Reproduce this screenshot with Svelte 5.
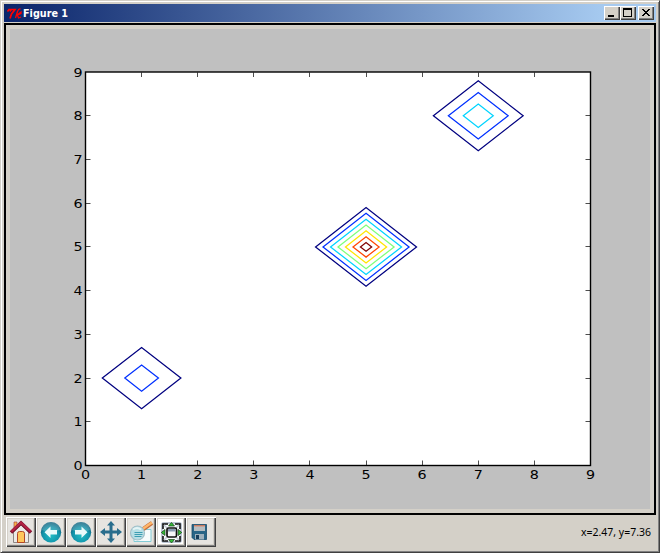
<script>
  const ticks = [0, 1, 2, 3, 4, 5, 6, 7, 8, 9];
  const px = (x) => 75.5 + x * 56.11;
  const py = (y) => 436.5 - y * 43.72;
  const jet = ['#000080', '#0030ff', '#00d4ff', '#7dff7a', '#ffe600', '#ff4600', '#800000'];
  const peaks = [
    { x: 5, y: 5, radii: [0.9, 0.767, 0.633, 0.5, 0.367, 0.233, 0.1] },
    { x: 7, y: 8, radii: [0.8, 0.533, 0.267] },
    { x: 1, y: 2, radii: [0.7, 0.3] }
  ];
  const diamond = (p, r) =>
    `M${px(p.x - r)} ${py(p.y)}L${px(p.x)} ${py(p.y + r)}L${px(p.x + r)} ${py(p.y)}L${px(p.x)} ${py(p.y - r)}Z`;
  const tools = ['home', 'back', 'forward', 'pan', 'zoom', 'subplots', 'save'];
</script>

<div class="window">
  <header>
    <svg class="tk" width="16" height="18" viewBox="0 0 16 18" fill="none" stroke="#f00" stroke-width="1.3">
      <path d="M.5 7.500L2 5.500H8L4.500 10L3 14.500M4 6L3 7.500" stroke-width="1.700" />
      <path d="M13.500 5Q11.500 4.500 10.500 7.500L8.500 14M10 11L14 8V9.500L10.500 11L11.500 14L14 13" />
    </svg>
    <svg class="title" width="52" height="18"><text x="0" y="13" textLength="45" lengthAdjust="spacingAndGlyphs">Figure 1</text></svg>
    <span class="controls">
      <button aria-label="Minimize"><svg width="16" height="14" shape-rendering="crispEdges"><path d="M4 9h6v2H4z" /></svg></button>
      <button aria-label="Maximize"><svg width="16" height="14" shape-rendering="crispEdges"><path fill-rule="evenodd" d="M3 2h9v9H3zM4 4v6h7V4z" /></svg></button>
      <button class="close" aria-label="Close"><svg width="16" height="14" shape-rendering="crispEdges"><path d="M4 3h2v1h1v1h2V4h1V3h2v1h-1v1h-1v1H9v1h1v1h1v1h1v1h-2V9H9V8H7v1H6v1H4V9h1V8h1V7h1V6H6V5H5V4H4z" /></svg></button>
    </span>
  </header>

  <main>
    <svg class="plot" width="640" height="480" viewBox="0 0 640 480">
      <rect x="75.5" y="43" width="505" height="393.5" fill="#fff" stroke="#000" stroke-width="1.4" />
      {#each ticks as t}
        {#if t > 0 && t < 9}
          <path d="M{Math.floor(px(t)) + 0.5} 436v-4.5M{Math.floor(px(t)) + 0.5} 43.5v4.5M76 {Math.floor(py(t)) + 0.5}h4.5M580 {Math.floor(py(t)) + 0.5}h-4.5" stroke="#000" stroke-width=".7" />
        {/if}
        <text transform="translate({px(t)} 450.3) scale(1.1 1)" text-anchor="middle">{t}</text>
        <text transform="translate(72.5 {py(t) + 4.5}) scale(1.1 1)" text-anchor="end">{t}</text>
      {/each}
      {#each peaks as p}
        {#each p.radii as r, i}
          <path d={diamond(p, r)} fill="none" stroke={r === 0.1 ? jet[6] : jet[i]} stroke-width="1.25" />
        {/each}
      {/each}
    </svg>
  </main>

  <footer>
    <div class="toolbar">
      {#each tools as tool}
        <button class={tool} aria-label={tool}>
          <svg width="24" height="24" viewBox="0 0 24 24">
            {#if tool === 'home'}
              <path d="M5 2h3v6H5z" fill="#f7b24a" stroke="#a33535" stroke-width=".6" />
              <path d="M4.500 12L12 5l7.500 7v10.500h-15z" fill="#eceae7" stroke="#77706c" stroke-width=".8" />
              <path d="M8.500 22.500v-9q0-2 2-2h3q2 0 2 2v9z" fill="#ffc65b" stroke="#b34826" />
              <path d="M2 12.500L12 3l10 9.500" fill="none" stroke="#7d1230" stroke-width="3.600" />
              <path d="M2.500 11.500L12 2.700l9.500 8.800" fill="none" stroke="#b52243" stroke-width="2" />
            {:else if tool === 'back' || tool === 'forward'}
              <defs>
                <radialGradient id="teal-{tool}" cx=".5" cy=".65" r=".6">
                  <stop offset="0" stop-color="#20bcc5" /><stop offset=".65" stop-color="#1295ab" /><stop offset="1" stop-color="#14607d" />
                </radialGradient>
              </defs>
              <circle cx="12" cy="12.300" r="10.200" fill="url(#teal-{tool})" />
              <path d="M3 10a9 8 0 0 1 18 0q-9 4-18 0z" fill="#8bc9d4" opacity=".35" />
              <path transform={tool === 'forward' ? 'translate(24 0) scale(-1 1)' : undefined} d="M5.500 12.300l6-5.800v3.500h6.500v4.600h-6.500v3.500z" fill="#e9fafa" />
            {:else if tool === 'pan'}
              <path d="M12 1l4 4.500h-2.500v5H18V8l5 4-5 4v-2.500h-4.500v5H16l-4 4.500-4-4.500h2.500v-5H6V16l-5-4 5-4v2.500h4.500v-5H8z" fill="#286d8d" />
            {:else if tool === 'zoom'}
              <path d="M5 9.500h17v12H5z" fill="#f7fcfc" stroke="#82cbd5" />
              <path d="M13 10L20 5l3-2" stroke="#c56f3c" stroke-width="4" />
              <path d="M13 9.500L20 4.500l3-2" stroke="#ffb669" stroke-width="2.400" />
              <circle cx="8.500" cy="13" r="7" fill="#b8dfe5" stroke="#a0bfc8" stroke-width="1.200" />
              <path d="M4 9.500q4-3 8 0" fill="none" stroke="#e5f4f5" stroke-width="2" />
              <path d="M5.500 12.500h8M5.500 14.500h8M5.500 16.500h7" stroke="#3c9eb2" stroke-width="1.100" />
            {:else if tool === 'subplots'}
              <rect x="3" y="3" width="19" height="19" rx="1" fill="#f8fafc" stroke="#a6b3c4" stroke-width="1.500" />
              <path d="M4 9V4h5M16 4h5v5M21 16v5h-5M9 21H4v-5" fill="none" stroke="#111" stroke-width="1.600" />
              <path d="M5 5l4 4M20 5l-4 4M5 20l4-4M20 20l-4-4" stroke="#c1cad5" stroke-width="1.500" />
              <rect x="8" y="8" width="9.500" height="9" rx="1.500" fill="#f6f7fa" stroke="#111" stroke-width="1.700" />
              <path d="M9 9h7.500v2.500H9z" fill="#899bb3" />
              <path d="M12.500 2.500l3 3.500h-6zM12.500 23l3-3.500h-6zM2.300 12.500l3.700-3v6zM22.800 12.500l-3.700-3v6z" fill="#32bd37" stroke="#153d17" stroke-width=".7" />
            {:else}
              <path d="M3 4.500h14.500v15H5l-2-2z" fill="#296586" stroke="#1b4d6b" stroke-width=".8" />
              <path d="M5 5h11v6H5z" fill="#c9ced1" />
              <path d="M5 5h11v1.500H5z" fill="#c67b61" />
              <path d="M5 8h11M5 10h11" stroke="#a2acb1" />
              <path d="M6 14h9v5.500H6z" fill="#9fb1bc" />
              <path d="M7 15h3v4H7z" fill="#173e5b" />
            {/if}
          </svg>
        </button>
      {/each}
    </div>
    <svg class="status" width="76" height="28"><text x="1" y="18.5" textLength="70" lengthAdjust="spacingAndGlyphs">x=2.47, y=7.36</text></svg>
  </footer>
</div>

<style>
  :global(body) { background: #d4d0c8; }
  .window {
    box-sizing: border-box;
    width: 660px;
    height: 553px;
    padding: 3px 3px 0;
    background: #d4d0c8;
    border: 1px solid #d4d0c8;
    border-right-color: #404040;
    border-bottom-color: #404040;
    box-shadow: inset 1px 1px #fff, inset -1px -1px #808080;
    display: flex;
    flex-direction: column;
  }
  header {
    width: 652px;
    height: 18px;
    display: flex;
    align-items: center;
    background: linear-gradient(90deg, #0a246a, #a6caf0 92%);
  }
  svg { display: block; }
  .tk { margin-left: 3px; }
  .title text { font: bold 11px "DejaVu Sans Condensed", "DejaVu Sans", sans-serif; fill: #fff; }
  .controls { display: flex; margin-left: auto; padding-right: 2px; }
  button {
    box-sizing: border-box;
    padding: 0;
    border: 0;
    border-radius: 0;
    background: #d4d0c8;
    box-shadow: inset 1px 1px #fff, inset -1px -1px #404040, inset -2px -2px #808080;
  }
  .controls button { width: 16px; height: 14px; }
  .controls .close { margin-left: 2px; }
  main {
    box-sizing: border-box;
    width: 652px;
    height: 492px;
    margin-top: 1px;
    border: 2px solid #000;
    padding: 4px;
    background: #d4d0c8;
  }
  .plot { background: #c0c0c0; }
  .plot text { font: 13px "DejaVu Sans", sans-serif; }
  footer { display: flex; height: 34px; justify-content: space-between; }
  .toolbar { display: flex; padding: 2px; }
  .toolbar button {
    width: 30px;
    height: 30px;
    display: flex;
    align-items: center;
    justify-content: center;
    background: #e6e4e0;
    box-shadow: inset 1px 1px #fff, inset -1px -1px #404040, inset -2px -2px #808080, inset -3px -3px #d4d0c8, inset 2px 2px #d4d0c8;
  }
  .toolbar .subplots { background: #fff; }
  .status { margin: 2px 0 0; overflow: visible; }
  .status text { font: 11px "Noto Sans", "Liberation Sans", sans-serif; }
</style>
